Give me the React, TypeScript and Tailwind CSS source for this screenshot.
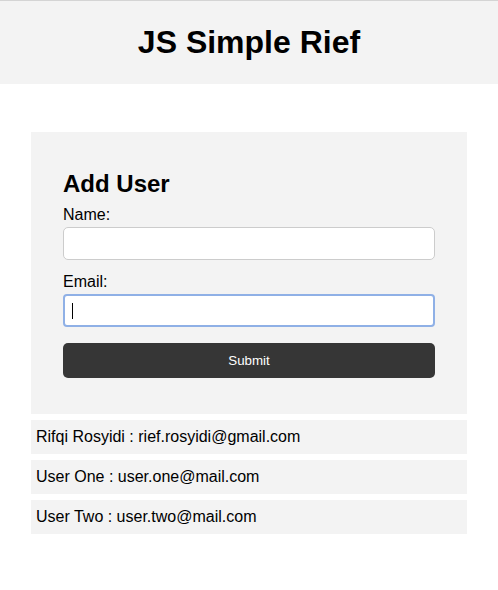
import React from "react";

export default function App() {
  const users = [
    "Rifqi Rosyidi : rief.rosyidi@gmail.com",
    "User One : user.one@mail.com",
    "User Two : user.two@mail.com",
  ];
  return (
    <div
      className="min-h-[590px] bg-white text-black border-t border-[#d4d4d4]"
      style={{ fontFamily: '"Liberation Sans", Arial, sans-serif' }}
    >
      <header className="h-[83px] bg-[#f3f3f3] flex items-center justify-center">
        <h1 className="text-[32px] font-bold leading-[37px]">JS Simple Rief</h1>
      </header>
      <main className="w-[436px] mx-auto mt-[48px] flex flex-col gap-[6px]">
        <div className="bg-[#f3f3f3] px-8 pt-[38px] pb-[36px] flex flex-col">
          <h2 className="text-[24px] font-bold leading-[28px] mb-[8px]">Add User</h2>
          <label className="text-[16px] leading-[18px] mb-[3px]">Name:</label>
          <input
            type="text"
            className="h-[33px] w-full bg-white border border-[#cccccc] rounded-[5px] px-2 outline-none"
          />
          <label className="text-[16px] leading-[18px] mb-[3px] mt-[13px]">Email:</label>
          <div className="relative">
            <input
              type="email"
              className="h-[33px] w-full bg-white border-2 border-[#8fb0e6] rounded-[4px] px-2 outline-none"
            />
            <span className="absolute left-[9px] top-[9px] w-px h-[16px] bg-black" />
          </div>
          <button className="mt-[16px] h-[35px] w-full bg-[#363636] text-white text-[13.33px] rounded-[5px]">
            Submit
          </button>
        </div>
        {users.map((u) => (
          <div key={u} className="bg-[#f3f3f3] h-[34px] px-[5px] flex items-center text-[16px]">
            {u}
          </div>
        ))}
      </main>
    </div>
  );
}
